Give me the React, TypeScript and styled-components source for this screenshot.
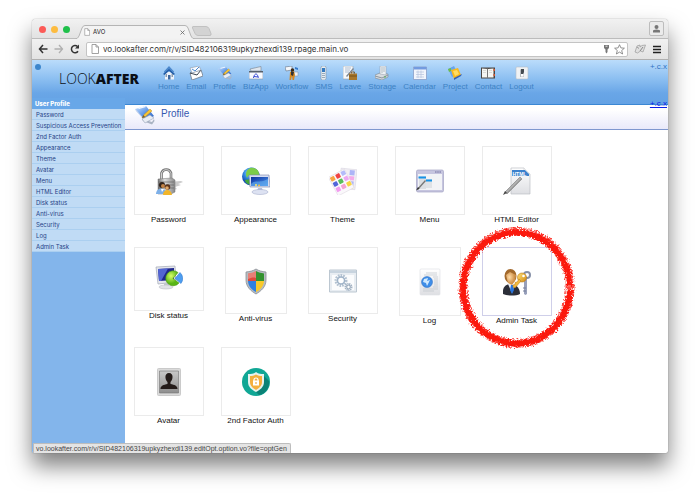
import React from "react";
import styled, { createGlobalStyle } from "styled-components";

const GlobalStyle = createGlobalStyle`
  * { box-sizing: border-box; }
  body { margin: 0; background: #fff; font-family: "Liberation Sans", Arial, sans-serif; }
  a { text-decoration: none; color: inherit; }
  button { border: 0; padding: 0; background: none; }
  svg { display: block; }
  ul { list-style: none; margin: 0; padding: 0; }
`;

const Desktop = styled.div`
  min-height: 100vh;
  display: flex;
  padding: 19px 32px 46px;
`;

const BrowserWindow = styled.div`
  position: relative;
  flex: 1;
  min-width: 0;
  display: flex;
  flex-direction: column;
  background: #fff;
  border-radius: 4px 4px 2px 2px;
  box-shadow: 0 0 1px rgba(0, 0, 0, 0.55), 0 13px 22px rgba(0, 0, 0, 0.5);
`;

const TabBar = styled.div`
  display: flex;
  align-items: flex-end;
  height: 20px;
  padding: 0 4px 0 7px;
  background: linear-gradient(#f1f1f1, #e2e2e2);
  border-bottom: 1px solid #bcbcbc;
  border-radius: 4px 4px 0 0;
`;

const Lights = styled.div`
  display: flex;
  gap: 5px;
  padding-bottom: 5px;
`;

const Light = styled.button<{ $color: string }>`
  width: 7px;
  height: 7px;
  border-radius: 50%;
  background: ${(p) => p.$color};
`;

const Tab = styled.div`
  position: relative;
  width: 120px;
  height: 14px;
  margin: 0 -3px -1px 5px;
  display: flex;
  align-items: center;
  padding: 0 10px 0 9px;
  gap: 3px;
  font: 6px/12px Inter, sans-serif;
  color: #222;
  & > * { position: relative; }
`;

const TabShape = styled.svg`
  && { position: absolute; inset: 0; }
`;

const TabTitle = styled.span`
  flex: 1;
`;

const UserButton = styled.button`
  width: 15px;
  height: 15px;
  margin: 0 0 2px auto;
  display: grid;
  place-items: center;
  border: 1px solid #bdbdbd;
  border-radius: 2px;
  background: #ebebeb;
`;

const NewTab = styled.button`
  margin-bottom: 2px;
`;

const Toolbar = styled.div`
  display: flex;
  align-items: center;
  height: 21px;
  padding: 0 6px 0 6px;
  gap: 6px;
  background: linear-gradient(#f1f1f1, #e3e3e3);
  border-bottom: 1px solid #b0b0b0;
`;

const AddressBox = styled.div`
  flex: 1;
  display: flex;
  align-items: center;
  height: 15px;
  padding: 0 2px 0 4px;
  gap: 4px;
  border: 1px solid #c4c4c4;
  border-radius: 2px;
  background: #fff;
`;

const Address = styled.input`
  flex: 1;
  min-width: 0;
  border: 0;
  padding: 0;
  outline: 0;
  background: none;
  color: #333;
  font: 8px/12px Inter, sans-serif;
`;

const Header = styled.header`
  display: flex;
  align-items: flex-start;
  height: 45px;
  padding-left: 3px;
  background: linear-gradient(#bbdcfb, #8fc1f2 40%, #69a6e7 75%, #64a2e4);
  border-bottom: 1px solid #3b87d3;
`;

const Dot = styled.span`
  width: 6px;
  height: 6px;
  margin-top: 4px;
  border-radius: 50%;
  background: #3c86cc;
`;

const Logo = styled.a`
  flex: none;
  width: 117px;
  padding: 9px 0 0 18px;
  color: #0b0f16;
  font: 300 14px/20px "Open Sans", sans-serif;
  b { font-weight: 800; }
`;

const Nav = styled.nav`
  flex: 1;
  display: flex;
  gap: 7px;
  padding-top: 6px;
`;

const NavLink = styled.a`
  display: flex;
  flex-direction: column;
  align-items: center;
  gap: 2px;
  color: #3d82c4;
  font-size: 8px;
  line-height: 10px;
`;

const Corner = styled.div`
  position: relative;
  display: flex;
  flex-direction: column;
  align-items: flex-end;
  gap: 25px;
  padding: 1px 1px 0 0;
  font-size: 8px;
  line-height: 12px;
`;

const CornerLink = styled.a<{ $active?: boolean }>`
  color: ${(p) => (p.$active ? "#0a1ee8" : "#2f74c4")};
  text-decoration: ${(p) => (p.$active ? "underline" : "none")};
`;

const Body = styled.div`
  flex: 1;
  display: flex;
`;

const Sidebar = styled.aside`
  position: relative;
  width: 93px;
  margin-top: -7px;
  background: #83b5eb;
  border-radius: 0 0 0 2px;
`;

const SideHead = styled.h2`
  margin: 0;
  padding-left: 3px;
  background: #68a7e8;
  color: #fff;
  font: 800 6px/11px Inter, sans-serif;
`;

const SideLink = styled.a`
  display: block;
  height: 11px;
  padding-left: 4px;
  background: #c0dbf5;
  border-bottom: 1px solid #abcff0;
  color: #1f3f86;
  font: 6px/11px Inter, sans-serif;
  white-space: nowrap;
`;

const Content = styled.main`
  flex: 1;
  min-width: 0;
`;

const PageTitle = styled.div`
  display: flex;
  gap: 6px;
  height: 25px;
  padding-left: 10px;
  background: linear-gradient(#fff 20%, #e9e9fa);
  border-bottom: 1px solid #7f97cf;
`;

const Title = styled.h1`
  margin: 0;
  color: #3558b0;
  font-size: 10px;
  font-weight: 400;
  line-height: 17px;
`;

const Tiles = styled.div`
  display: grid;
  grid-template-columns: repeat(5, 87px);
  grid-template-rows: 101px 100px auto;
  padding: 16px 0 26px;
`;

const Tile = styled.a`
  position: relative;
  display: flex;
  flex-direction: column;
  align-items: center;
  color: #111;
  font-size: 8px;
  line-height: 10px;
`;

const TileBox = styled.span<{ $w: number; $h: number; $hot?: boolean }>`
  width: ${(p) => p.$w}px;
  height: ${(p) => p.$h}px;
  display: grid;
  place-items: center;
  border: 1px solid ${(p) => (p.$hot ? "#cfcfe9" : "#ebebeb")};
`;

const Ring = styled.svg`
  position: absolute;
  top: -22px;
  left: -18px;
  pointer-events: none;
`;

const Status = styled.div`
  position: absolute;
  left: 1px;
  bottom: 0;
  padding: 0 3px 0 2px;
  border: 1px solid #bdbdbd;
  border-bottom: 0;
  border-radius: 0 2px 0 0;
  background: #e4e4e4;
  color: #444;
  font: 7px/9px "Liberation Sans", Arial, sans-serif;
`;

const Gradients = () => (
  <svg width="0" height="0" aria-hidden="true">
    <defs>
      <linearGradient id="steel" x2="1"><stop stopColor="#777" /><stop offset=".4" stopColor="#ddd" /><stop offset="1" stopColor="#888" /></linearGradient>
      <linearGradient id="paper" x2="0" y2="1"><stop stopColor="#fff" /><stop offset="1" stopColor="#dedfe3" /></linearGradient>
      <linearGradient id="screen" x2="1" y2="1"><stop stopColor="#0b2f9c" /><stop offset="1" stopColor="#4f9af0" /></linearGradient>
      <radialGradient id="globe" cx=".4" cy=".3"><stop stopColor="#9fe0ff" /><stop offset=".6" stopColor="#2f86e0" /><stop offset="1" stopColor="#1a52b4" /></radialGradient>
      <radialGradient id="lime" cx=".4" cy=".35"><stop stopColor="#d9ff6a" /><stop offset="1" stopColor="#58b516" /></radialGradient>
      <radialGradient id="skin" cx=".35" cy=".4"><stop stopColor="#ffdca8" /><stop offset="1" stopColor="#d0924c" /></radialGradient>
      <linearGradient id="gold" x2="1" y2="1"><stop stopColor="#ffe27a" /><stop offset="1" stopColor="#d28a12" /></linearGradient>
      <linearGradient id="frame" x2="0" y2="1"><stop stopColor="#c9c9c9" /><stop offset="1" stopColor="#8e8e8e" /></linearGradient>
      <linearGradient id="notebook" x2="1" y2="1"><stop stopColor="#cfe5ff" /><stop offset=".5" stopColor="#5b94e6" /><stop offset="1" stopColor="#2a5cba" /></linearGradient>
    </defs>
  </svg>
);

const svg = (size: number, body: React.ReactNode, view = size) => (
  <svg width={size} height={size} viewBox={`0 0 ${view} ${view}`} aria-hidden="true">{body}</svg>
);

const notebook = (
  <>
    <path d="M7 14l10 3 2-3 .5 2-2.500 3.500L8 16z" fill="#aab4c4" />
    <path d="M0 4L11 1l8 10-8 5z" fill="url(#notebook)" />
    <path d="M0 4l11 12v1L1 6z" fill="#b7c9e8" />
    <path d="M7 14l8-4 4 3-9 5z" fill="#e9edf4" stroke="#8b98b0" strokeWidth=".5" />
    <path d="M7 13l1.500-3L15 4l2 2-7 6z" fill="#f8c433" stroke="#a97d1f" strokeWidth=".4" />
    <path d="M7 13l1.500-3 1.500 2z" fill="#6d5b3e" />
    <path d="M3 3l7-2 1 1-7 2z" fill="#f3f8ff" />
  </>
);

const navItems: [string, React.ReactNode][] = [
  ["Home", svg(14, <>
    <path d="M3 6h9v7.500H3z" fill="#eef3fa" /><path d="M7 2l6 6-1.500 1L7 5 2.500 9 1 8z" fill="#255fa8" />
    <path d="M7 0l5 5.500V7L7 3 2 7V5.500z" fill="#4c88cc" /><path d="M6 9h2.500v4.500H6z" fill="#3d68a0" /><path d="M3.500 8h1.500v3H3.500zM9.500 8H11v3H9.500z" fill="#8c9cad" />
  </>)],
  ["Email", svg(14, <>
    <path d="M1 7l11-3 2 6-11 4z" fill="#fff" stroke="#66707e" strokeWidth=".7" /><path d="M1 7l7 2 4-5" fill="none" stroke="#39424e" />
    <path d="M1 2l9-2 2 4-9 3z" fill="#f9fbff" stroke="#8a97a8" strokeWidth=".6" /><path d="M3 3l3 2 4-4" fill="none" stroke="#4b8ad1" />
  </>)],
  ["Profile", svg(14, notebook, 20)],
  ["BizApp", svg(14, <>
    <path d="M1 3l11-2.500V5H2z" fill="#dfe6ee" stroke="#76828f" strokeWidth=".6" /><path d="M0 5.500h14V13H0z" fill="#f8faff" stroke="#8191a5" strokeWidth=".6" />
    <path d="M0 5h14v1.500H0z" fill="#555f6c" /><path d="M4.500 12C5 9 6.500 7 8 8.500S8 12 10 11M5 10.500l4 .5" fill="none" stroke="#3648d2" />
  </>)],
  ["Workflow", svg(14, <>
    <path d="M0 1l7-1v4L1 5z" fill="#f4f6f9" stroke="#627184" strokeWidth=".6" /><path d="M7 6h6v4H7z" fill="#eef1f5" stroke="#7d8ea1" strokeWidth=".5" />
    <circle cx="7.500" cy="4" r="1.700" fill="#3e2915" /><path d="M5 6l4-1 1 4-1 5H7.500L7 10l-1 4H4.500z" fill="#d68922" /><path d="M6 5l3 1-1 4-2-1z" fill="#333" /><path d="M10 1l3 1v2l-3-1z" fill="#357bcc" />
  </>)],
  ["SMS", svg(14, <>
    <path d="M5 0h3l1 1v12l-1 1H5l-1-1V1z" fill="#e6edf3" stroke="#7f95a8" strokeWidth=".6" /><path d="M5 2h3v4H5z" fill="#367bc0" /><path d="M5 7.500h3M5 9.500h3M5 11.500h3" stroke="#8598a9" strokeWidth=".8" />
  </>)],
  ["Leave", svg(14, <>
    <path d="M0 0h10v13H0z" fill="#f7f8fa" stroke="#93a1b0" strokeWidth=".6" /><path d="M2 2h6M2 4h5M2 6h4" stroke="#90a6bf" strokeWidth=".7" /><path d="M3 10l7-8 1 1-7 8z" fill="#7b8692" />
    <path d="M6 7.500h8V14H6z" fill="#a8772c" /><path d="M8.500 7.500V6h3v1.500M6 10h8" fill="none" stroke="#6b4a1a" strokeWidth=".8" />
  </>)],
  ["Storage", svg(14, <>
    <path d="M0 9l5-2 8 1v3l-6 3-7-2z" fill="#d8dce0" stroke="#707982" strokeWidth=".5" /><path d="M5 0h6v9l-6-1z" fill="#edf1f4" stroke="#909ba6" strokeWidth=".5" /><path d="M7 1v6M9 1v5" stroke="#9aa4ad" strokeWidth=".7" /><path d="M0 10l7 2 6-3" fill="none" stroke="#8b949c" /><circle cx="10" cy="11" r=".7" fill="#2eac35" />
  </>)],
  ["Calendar", svg(14, <>
    <path d="M.5 1h13v12.500H.5z" fill="#f2f5fc" stroke="#8195c0" strokeWidth=".7" /><path d="M1 1h12.500v2.500H1z" fill="#739be0" /><path d="M3 6h8M3 8.500h8M3 11h8M5 4.500v7.500M8 4.500v7.500" stroke="#b6c3dd" strokeWidth=".7" />
  </>)],
  ["Project", svg(14, <>
    <path d="M0 3l6-3 4 8-6 3z" fill="#66a4ef" /><path d="M3 4l7-2 3 7-7 4z" fill="#f9b81c" /><path d="M5 5l4-1 2 4-4 2z" fill="#ffdc61" /><path d="M6 12l8-4-1 2-7 4z" fill="#355fb3" /><path d="M0 3l3-1v3l-2 1z" fill="#6fbd45" />
  </>)],
  ["Contact", svg(14, <>
    <path d="M0 1.500h14v11H0z" fill="#4c4642" /><path d="M1 2.500l6 .5 5.500-.5v9H1z" fill="#f5f5f2" /><path d="M6.500 2.500v9.500" stroke="#777" /><path d="M2 4.500h3M2 6.500h3M8 4.500h3M8 6.500h3" stroke="#c9c9c5" strokeWidth=".6" /><path d="M12.500 3H14v2h-1.500zM12.500 8H14v2h-1.500z" fill="#d6542c" />
  </>)],
  ["Logout", svg(14, <>
    <rect x="1" y="1" width="12" height="12" rx="1" fill="#f0f2f4" stroke="#b5bdc6" strokeWidth=".6" /><path d="M5 3.500h4V11H5z" fill="#b6babf" /><path d="M6 3h3v3L8 8H6z" fill="#444a50" /><path d="M6 8h2.500v2.500H6z" fill="#fff" />
  </>)],
];

const padlock = svg(28, <>
  <path d="M12 15l14-1 2 1-5 2 3 1-6 2 2 2-9 3z" fill="#999" opacity=".5" />
  <path d="M6.500 14V6a5 5 0 0 1 9.500 0v8" fill="none" stroke="#747474" strokeWidth="2.600" /><path d="M6.500 14V6a5 5 0 0 1 9.500 0v8" fill="none" stroke="#d2d2d2" />
  <path d="M3 12l14-1 3 2v12l-4 2H3z" fill="url(#steel)" stroke="#777" strokeWidth=".5" /><path d="M3 15h16M3 18h16M3 21h16" stroke="#666" strokeWidth=".7" />
  <circle cx="7" cy="18" r="3" fill="#31231b" /><circle cx="8" cy="19" r="2" fill="#c38347" /><path d="M1 27c0-7 10-7 11 0z" fill="#7eb0e8" /><path d="M6 22l1 3 2-3z" fill="#fff" />
  <circle cx="12.500" cy="20" r="2.800" fill="#5a331c" /><circle cx="12" cy="21" r="1.800" fill="#e2a967" /><path d="M8 28c0-6 8-7 9 0z" fill="#f1b529" />
</>);

const appearance = svg(28, <>
  <circle cx="9" cy="9.500" r="9" fill="url(#globe)" /><path d="M8 1c6-1 10 3 9 8l-5 2-3-3-3 1-1 2C3 7 4 3 8 1z" fill="#7ccc48" /><path d="M3 13l5-1 2 5-2 1c-3-1-5-3-5-5z" fill="#43a63a" />
  <path d="M7 8h20l1 12H8z" fill="#d7def2" stroke="#7582aa" strokeWidth=".6" /><path d="M9 10h17v9H9z" fill="url(#screen)" /><path d="M9 17c5-5 7 0 17-5v7H9z" fill="#69b2f2" opacity=".6" />
  <circle cx="14" cy="18" r="1" fill="#ffe866" /><circle cx="17" cy="18.500" r="1" fill="#ffbf38" /><path d="M16 21h4l1 3h-6z" fill="#b4bddb" /><ellipse cx="18" cy="25" rx="8" ry="2.500" fill="#dde2f2" stroke="#9ba5c5" strokeWidth=".5" />
</>);

const swatchColors = ["#f6a544", "#f04343", "#b4bbfa", "#5264da", "#58bd5c", "#eda9f2", "#f39cf0", "#f5a2d3", "#f8d544"];
const theme = svg(28, <>
  <g transform="rotate(6 20 12)">
    <path d="M11 2h16v20H11z" fill="#f1eff4" stroke="#d5d1df" strokeWidth=".5" />
    <path d="M20 3h5v5h-5zM20 14h5v4h-5z" fill="#adb5f7" /><path d="M20 9h5v4h-5z" fill="#f4abe9" /><path d="M20 18h5v3h-5z" fill="#f8dd57" />
  </g>
  <g transform="rotate(-28 12 15)">
    <path d="M3 5h18v21H3z" fill="#faf8fb" stroke="#ddd7df" strokeWidth=".5" />
    {swatchColors.map((c, i) => <rect key={i} x={4 + (i % 3) * 6} y={6 + Math.floor(i / 3) * 6} width="4.500" height="4.500" rx=".7" fill={c} />)}
  </g>
</>);

const menu = svg(28, <>
  <rect x=".5" y="3" width="27" height="22" rx="1.500" fill="#c6c5df" stroke="#a5a5c4" strokeWidth=".7" /><path d="M2 7h24v16H2z" fill="#f2f3f6" /><path d="M19 5h6" stroke="#716f9e" strokeDasharray="1.600 .6" />
  <path d="M3 9h7v13H3z" fill="#dcdfe3" /><path d="M10 12h6v9h-6z" fill="#dfe2e6" /><path d="M2.500 9.500H10v2H2.500zM10 12.500h6v2h-6z" fill="#1593e8" />
  <path d="M1 22l8-9 1 1-8 9z" fill="#777" /><path d="M0 23.500L2 20l1.500 1.500z" fill="#333" />
</>);

const htmlEditor = svg(28, <>
  <path d="M8 1h13l6 6v20H8z" fill="url(#paper)" stroke="#bcbec4" strokeWidth=".7" /><path d="M21 1v6h6" fill="#f9f9f9" stroke="#c7c9ce" strokeWidth=".6" />
  <path d="M9 3h13l4 4v2H9z" fill="#3c82cd" /><text x="9.500" y="8.500" fontSize="5" fontWeight="700" fontFamily="Liberation Sans, sans-serif" fill="#fff">HTML</text>
  <path d="M2 25L17 10l2 2L4 27z" fill="#999" stroke="#777" strokeWidth=".5" /><path d="M3 25.500L17.500 11" stroke="#ddd" strokeWidth=".7" /><path d="M0 28l2-4 2 2z" fill="#444" />
</>);

const disk = svg(28, <>
  <path d="M1 2l19-1 1 16-18 2z" fill="#e4e6ec" stroke="#a2a7b4" strokeWidth=".7" /><path d="M3 4l16-1v12l-15 1z" fill="#1f278c" /><path d="M3 4l10-.500L6 16H4z" fill="#5265d2" />
  <path d="M9 18h5v4H9z" fill="#c3c7cf" /><ellipse cx="11" cy="22" rx="7" ry="2" fill="#e0e2e7" stroke="#b4b8c1" strokeWidth=".5" />
  <path d="M18 13.500l5-6A7.500 7.500 0 1 0 24 18z" fill="url(#lime)" stroke="#4d9b14" strokeWidth=".6" /><path d="M20 13.500l5-6a8 8 0 0 1 1 11z" fill="#4e9df0" stroke="#2873c9" strokeWidth=".5" />
</>);

const antivirus = svg(28, <>
  <path d="M14 2c3 2 6 2.500 10 3v8c0 7-5 11-10 14C9 24 4 20 4 13V5c4-.5 7-1 10-3z" fill="#b8bcc2" stroke="#8a8f96" strokeWidth=".8" />
  <path d="M14 4c-3 1.500-5 2-8 2.500V14h8z" fill="#df4a3c" /><path d="M14 4c3 1.500 5 2 8 2.500V14h-8z" fill="#33922f" />
  <path d="M6 14c0 5 4 9 8 11V14z" fill="#2f7fe0" /><path d="M22 14c0 5-4 9-8 11V14z" fill="#f9c92b" /><path d="M6 6.500C9 6 12 5 14 4v7c-3-1-5 0-8 1z" fill="#fff" opacity=".3" />
</>);

const security = svg(28, <>
  <path d="M.5 3h27v22H.5z" fill="#e8edf2" stroke="#bcc7d1" /><path d="M1 3.500h26V6H1z" fill="#c8d4df" /><path d="M3 8h22v15H3z" fill="#fbfcfd" />
  <circle cx="12" cy="13.500" r="5" fill="none" stroke="#b3c2d1" strokeWidth="3" strokeDasharray="1.600 .9" /><circle cx="12" cy="13.500" r="3.500" fill="#fff" stroke="#9fb3c8" strokeWidth="1.500" />
  <circle cx="19.500" cy="20" r="3" fill="none" stroke="#a3b3c4" strokeWidth="2" strokeDasharray="1.200 .6" /><circle cx="19.500" cy="20" r="1.800" fill="#fff" stroke="#93a5b7" />
</>);

const log = svg(28, <>
  <rect x="4" y="1" width="20" height="26" rx="1" fill="url(#paper)" stroke="#e1e3e7" strokeWidth=".7" />
  <path d="M10 5h11M8 7h13M17 9h5M18 11h4M18 13h4M18 15h4M18 17h4M17 19h5M7 21h15M7 23h11" stroke="#bfc4ca" strokeWidth=".7" />
  <circle cx="11" cy="14" r="5.500" fill="#3f8ee8" stroke="#2869bc" strokeWidth=".5" /><path d="M8 11l4-1-1 3 3-1-3 6-1-3-3-1z" fill="#d1eaff" />
</>);

const admin = svg(28, <>
  <path d="M0 26c-1-8 4-10 8-10s9 3 9 10c-4 2-13 2-17 0z" fill="#2b2e38" /><path d="M5 16h7l-3 9z" fill="#e9edf5" /><path d="M8 17h2l1 5-2 4-2-4z" fill="#2673db" />
  <ellipse cx="7.500" cy="8" rx="6" ry="7" fill="#a3692c" /><path d="M3 7l4-3 6 3-1 6-3 4-4-2z" fill="url(#skin)" />
  <circle cx="24" cy="7" r="3" fill="none" stroke="#8690a7" strokeWidth="2" /><path d="M21 10h3v16l-1.500 1-1.500-1z" fill="#98a0bb" /><path d="M20 20h3M20 23h3" stroke="#747e9b" />
  <circle cx="19" cy="9.500" r="4.500" fill="url(#gold)" stroke="#b57514" strokeWidth=".6" /><circle cx="20.500" cy="8" r="1.300" fill="#fff" /><path d="M16 11l2 2-6 7-2-1v-2l2-.5v-2l2-.5z" fill="#f2b93d" stroke="#b77a1b" strokeWidth=".5" />
</>);

const avatar = svg(28, <>
  <rect x="2.500" y=".5" width="23" height="27" rx="1" fill="#dadada" stroke="#cacaca" /><path d="M4.500 3h19v22h-19z" fill="url(#frame)" stroke="#747474" strokeWidth=".6" />
  <path d="M14 5c5 0 4 7 1.500 9v2c4 1 7 1.500 7 5H5.500c0-3.500 3-4 7-5v-2C10 12 9 5 14 5z" fill="#241c1a" />
</>);

const factor = svg(28, <>
  <circle cx="14" cy="14" r="14" fill="#10a795" /><path d="M21 7l6 6c1 7-4 13-10 14l-5-5z" fill="#0b8276" />
  <path d="M14 4c2.500 2 5 2 8 2v8c0 5-4 8-8 10-4-2-8-5-8-10V6c3 0 5.500 0 8-2z" fill="#e8f2ed" /><path d="M14 6.500c2 1.200 4 1.500 6 1.500v6c0 4-3 6-6 8-3-2-6-4-6-8V8c2 0 4-.3 6-1.500z" fill="#f5af3c" />
  <path d="M12 13v-1a2 2 0 0 1 4 0v1" fill="none" stroke="#fff" strokeWidth="1.200" /><rect x="11" y="12.500" width="6" height="5" fill="#fff" /><path d="M14 14v2" stroke="#e79a25" />
</>);

type TileData = { name: string; icon: React.ReactNode; w?: number; h?: number; hot?: boolean };
const tiles: TileData[] = [
  { name: "Password", icon: padlock },
  { name: "Appearance", icon: appearance },
  { name: "Theme", icon: theme },
  { name: "Menu", icon: menu },
  { name: "HTML Editor", icon: htmlEditor },
  { name: "Disk status", icon: disk, h: 64 },
  { name: "Anti-virus", icon: antivirus, w: 62, h: 67 },
  { name: "Security", icon: security, h: 67 },
  { name: "Log", icon: log, w: 62 },
  { name: "Admin Task", icon: admin, hot: true },
  { name: "Avatar", icon: avatar },
  { name: "2nd Factor Auth", icon: factor },
];

const sideItems = ["Password", "Suspicious Access Prevention", "2nd Factor Auth", "Appearance", "Theme", "Avatar", "Menu", "HTML Editor", "Disk status", "Anti-virus", "Security", "Log", "Admin Task"];

const PageIcon = ({ h }: { h: number }) => (
  <svg width={h - 2} height={h} viewBox="0 0 8 10" aria-hidden="true">
    <path d="M1 .5h4L7.500 3v6.500H1zM5 .5V3h2.500" fill="#fff" stroke="#8b8b8b" strokeWidth=".8" />
  </svg>
);

const AdminRing = () => (
  <Ring width="124" height="126" viewBox="0 0 124 126" aria-hidden="true">
    <defs>
      <filter id="chalk" x="-10%" y="-10%" width="120%" height="120%">
        <feTurbulence type="fractalNoise" baseFrequency=".55" numOctaves="2" seed="4" result="n" />
        <feDisplacementMap in="SourceGraphic" in2="n" scale="6" xChannelSelector="R" yChannelSelector="G" />
      </filter>
    </defs>
    <g filter="url(#chalk)" fill="none" stroke="#fb1a12">
      <path d="M115 61A53.500 55.500 0 1 0 115 65" strokeWidth="6" />
      <ellipse cx="61.500" cy="62.500" rx="53.500" ry="56" strokeWidth="9" strokeDasharray="2 1" opacity=".8" />
    </g>
  </Ring>
);

export default function App() {
  return (
    <Desktop>
      <GlobalStyle />
      <BrowserWindow>
        <TabBar>
          <Lights>
            <Light $color="#fc5b57" aria-label="Close" />
            <Light $color="#fdbc40" aria-label="Minimize" />
            <Light $color="#1fc04a" aria-label="Zoom" />
          </Lights>
          <Tab>
            <TabShape width="120" height="14" viewBox="0 0 120 14" aria-hidden="true">
              <path d="M0 14Q3 14 4 11L7 3Q8 .5 10 .5H110Q112 .5 113 3L116 11Q117 14 120 14" fill="#f3f3f3" stroke="#b5b5b5" />
              <path d="M2 14h116" stroke="#f1f1f1" />
            </TabShape>
            <PageIcon h={8} />
            <TabTitle>AVO</TabTitle>
            <button aria-label="Close tab">
              <svg width="5" height="5" viewBox="0 0 5 5"><path d="M.5.5l4 4M4.500.5l-4 4" stroke="#666" strokeWidth=".8" /></svg>
            </button>
          </Tab>
          <NewTab aria-label="New tab">
            <svg width="20" height="10" viewBox="0 0 20 10"><path d="M1 .5h13q2 0 3 2l2 5q.5 2-1 2H6q-2 0-3-2L.5 2Q0 .5 1 .5z" fill="#d3d3d3" stroke="#b9b9b9" strokeWidth=".8" /></svg>
          </NewTab>
          <UserButton aria-label="User">
            <svg width="7" height="8" viewBox="0 0 7 8"><circle cx="3.500" cy="2" r="2" fill="#777" /><path d="M0 7.500V6q0-1.500 3.500-1.500T7 6v1.500z" fill="#777" /></svg>
          </UserButton>
        </TabBar>
        <Toolbar>
          <button aria-label="Back"><svg width="10" height="10" viewBox="0 0 10 10"><path d="M5 1L1.500 5 5 9M1.500 5H9.500" fill="none" stroke="#333" strokeWidth="1.500" /></svg></button>
          <button aria-label="Forward"><svg width="10" height="10" viewBox="0 0 10 10"><path d="M5 1l3.500 4L5 9M8.500 5H.5" fill="none" stroke="#b0b0b0" strokeWidth="1.300" /></svg></button>
          <button aria-label="Reload"><svg width="10" height="10" viewBox="0 0 10 10"><path d="M8 7.200A3.600 3.600 0 1 1 7.500 2.500" fill="none" stroke="#333" strokeWidth="1.500" /><path d="M9 .5v4H5z" fill="#333" /></svg></button>
          <AddressBox>
            <PageIcon h={10} />
            <Address aria-label="Address" defaultValue="vo.lookafter.com/r/v/SID482106319upkyzhexdi139.rpage.main.vo" />
            <svg width="7" height="10" viewBox="0 0 7 10" aria-hidden="true"><path d="M1 1h5v3L4.500 5.500V8L3.500 9.500 2.500 8V5.500L1 4z" fill="#777" /><path d="M2.500 2.200h2" stroke="#fff" strokeWidth=".8" /></svg>
            <button aria-label="Bookmark"><svg width="11" height="11" viewBox="0 0 11 11"><path d="M5.500.7l1.400 3.200 3.500.3-2.700 2.300.9 3.500-3.100-1.900L2.400 10l.9-3.500L.6 4.200l3.500-.3z" fill="#fff" stroke="#777" strokeWidth=".8" /></svg></button>
          </AddressBox>
          <button aria-label="Extension"><svg width="12" height="10" viewBox="0 0 12 10"><path d="M1 8l2-6 3-1v2l2-1.500 3.500-.5-2.500 7-2.500-1L3.500 9z" fill="#e0e0e0" stroke="#9a9a9a" strokeWidth=".7" /><path d="M3.500 3l1 1.500M6 7l3-4" stroke="#888" fill="none" /></svg></button>
          <button aria-label="Browser menu"><svg width="10" height="9" viewBox="0 0 10 9"><path d="M1 1.500h8M1 4.500h8M1 7.500h8" stroke="#222" strokeWidth="1.500" /></svg></button>
        </Toolbar>
        <Header>
          <Dot />
          <Logo href="#">LOOK<b>AFTER</b></Logo>
          <Nav>
            {navItems.map(([name, icon]) => <NavLink href="#" key={name}>{icon}{name}</NavLink>)}
          </Nav>
          <Corner>
            <CornerLink href="#">+.c.x</CornerLink>
            <CornerLink href="#" $active>+.c.x</CornerLink>
          </Corner>
        </Header>
        <Body>
          <Sidebar>
            <SideHead>User Profile</SideHead>
            <ul>{sideItems.map((s) => <li key={s}><SideLink href="#">{s}</SideLink></li>)}</ul>
          </Sidebar>
          <Content>
            <PageTitle>
              {svg(20, notebook)}
              <Title>Profile</Title>
            </PageTitle>
            <Tiles>
              {tiles.map((t) => (
                <Tile href="#" key={t.name}>
                  <TileBox $w={t.w ?? 70} $h={t.h ?? 69} $hot={t.hot}>{t.icon}</TileBox>
                  {t.name}
                  {t.hot && <AdminRing />}
                </Tile>
              ))}
            </Tiles>
          </Content>
        </Body>
        <Status>vo.lookafter.com/r/v/SID482106319upkyzhexdi139.editOpt.option.vo?file=optGen</Status>
        <Gradients />
      </BrowserWindow>
    </Desktop>
  );
}
